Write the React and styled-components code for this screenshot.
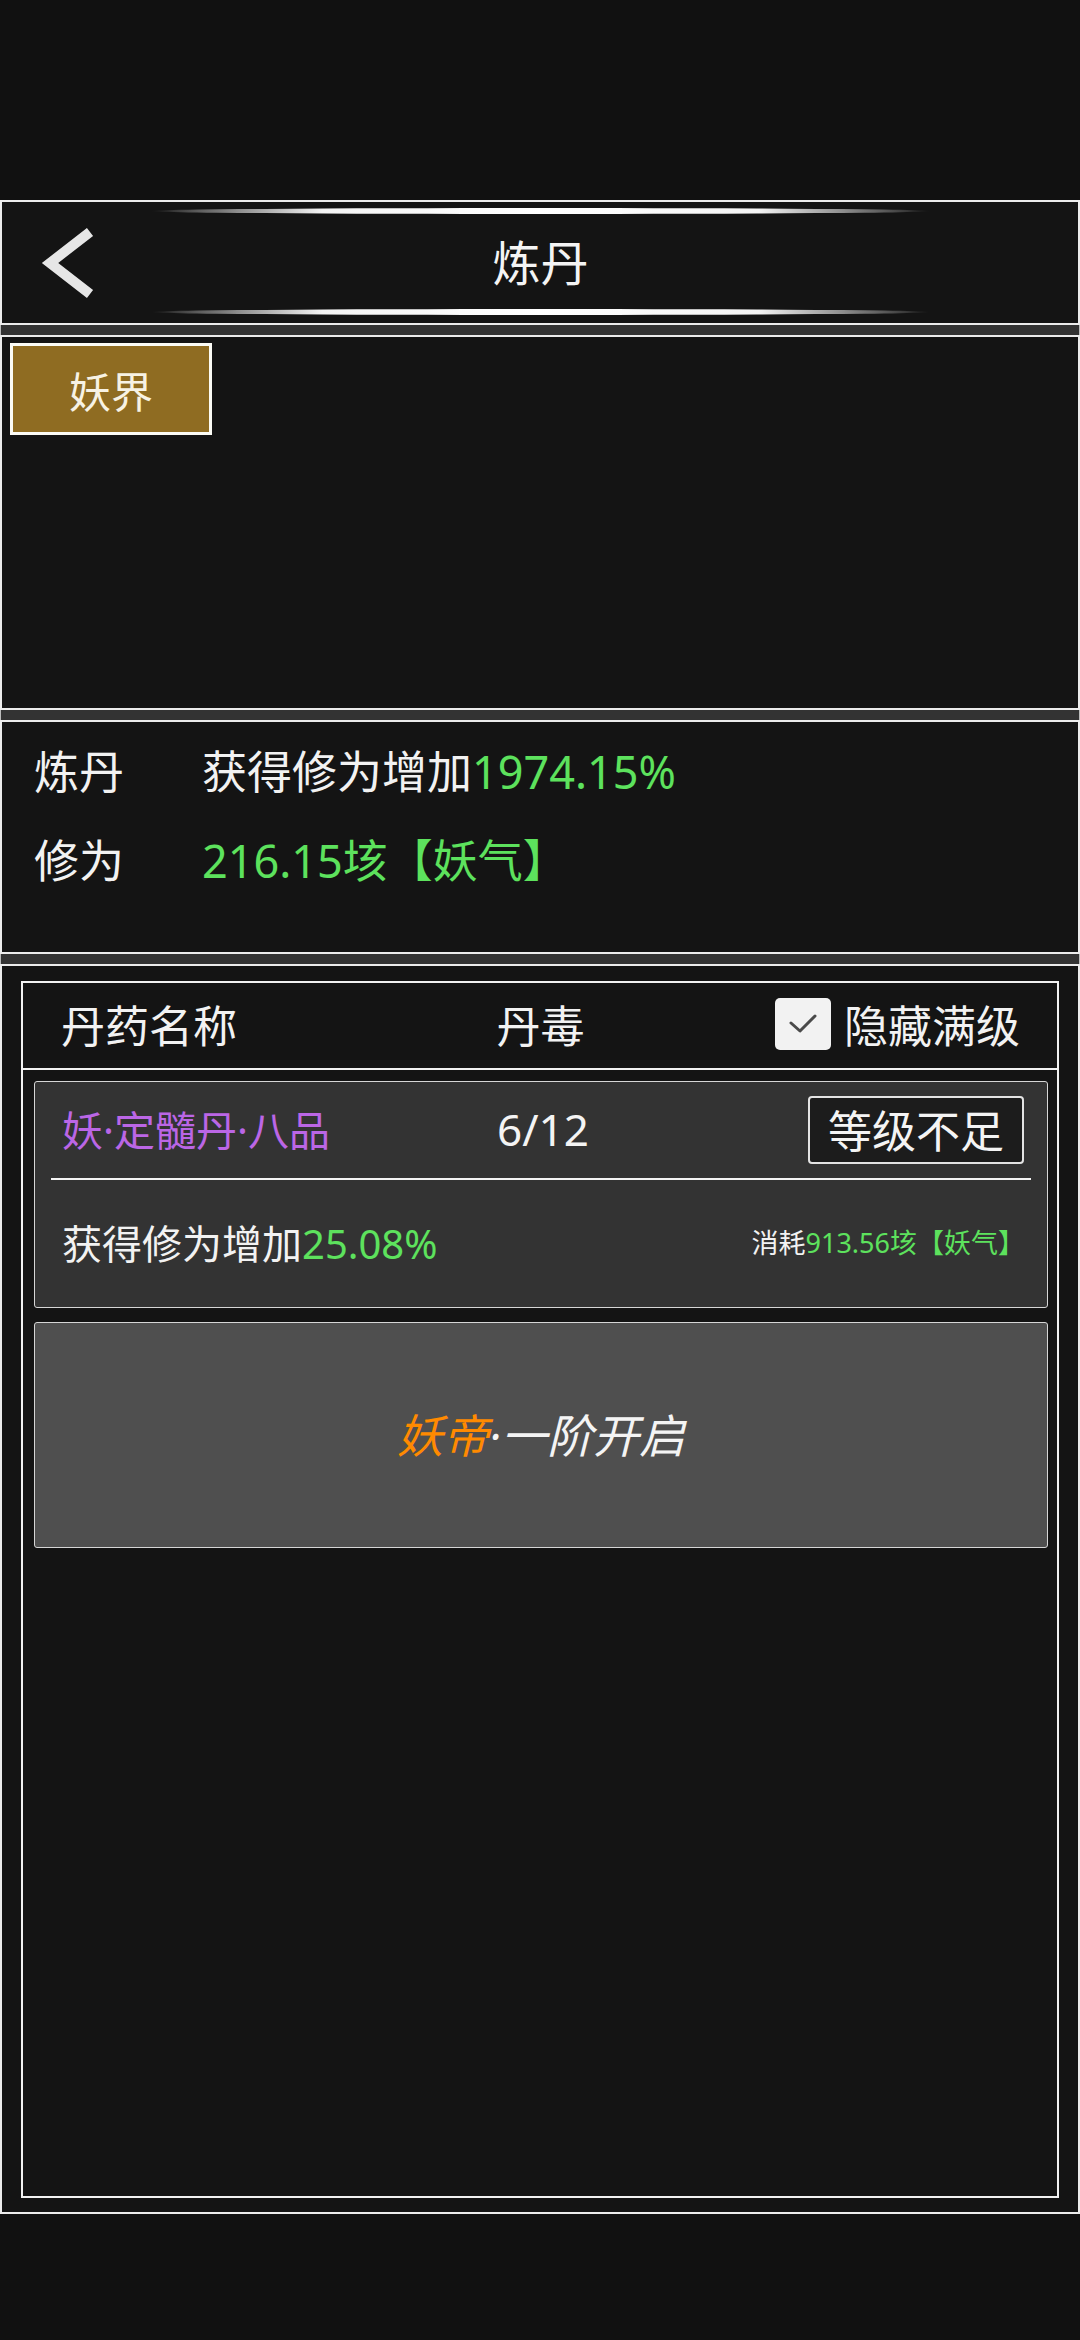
import React from "react";
import styled, { createGlobalStyle } from "styled-components";

const Global = createGlobalStyle`
  html, body { margin: 0; padding: 0; background: #111111; }
  body {
    font-family: "Noto Sans", "Noto Sans CJK SC", sans-serif;
    color: #f2f2f2;
    -webkit-font-smoothing: antialiased;
  }
  * { box-sizing: border-box; }
`;

const Screen = styled.div`
  width: 1080px;
  height: 2340px;
  display: flex;
  flex-direction: column;
  background: #111111;
  padding-top: 200px;
`;

const Panel = styled.section`
  border: 2px solid #ececec;
  background: #141414;
  height: ${(p) => p.$h}px;
  flex-shrink: 0;
`;

const Separator = styled.div`
  height: 10px;
  background: #333333;
  flex-shrink: 0;
  border-left: 1px solid #bbb;
  border-right: 1px solid #bbb;
`;

/* Header */
const Header = styled(Panel)`
  display: grid;
  grid-template-columns: 149px 779px 1fr;
  align-items: center;
`;

const BackButton = styled.button`
  background: none;
  border: none;
  padding: 0;
  margin-left: 38px;
  width: 56px;
  height: 72px;
  display: flex;
  cursor: pointer;
`;

const TitleBlock = styled.div`
  display: flex;
  flex-direction: column;
  align-items: stretch;
  padding: 6px 0 8px;
  height: 100%;
`;

const Ornament = styled.div`
  height: 6px;
  border-radius: 50%;
  background: linear-gradient(
    90deg,
    rgba(255, 255, 255, 0) 0%,
    rgba(140, 140, 140, 0.6) 6%,
    #f4f4f4 22%,
    #ffffff 50%,
    #f4f4f4 78%,
    rgba(140, 140, 140, 0.6) 94%,
    rgba(255, 255, 255, 0) 100%
  );
`;

const Title = styled.h1`
  flex: 1;
  margin: 0;
  display: flex;
  align-items: center;
  justify-content: center;
  font-size: 48px;
  font-weight: 400;
  color: #f4f4f4;
  padding-bottom: 4px;
`;

/* Tabs */
const TabArea = styled(Panel)`
  padding: 6px 8px;
  display: flex;
  align-items: flex-start;
`;

const Tab = styled.button`
  width: 202px;
  height: 92px;
  border: 3px solid #fbfbf5;
  background: #8f6c22;
  color: #f7f2e4;
  font-family: inherit;
  font-size: 42px;
  display: flex;
  align-items: center;
  justify-content: center;
  padding: 0;
  cursor: pointer;
`;

/* Stats */
const Stats = styled(Panel)`
  padding: 20px 0 0 32px;
  display: grid;
  grid-template-columns: 168px 1fr;
  grid-auto-rows: 60px;
  row-gap: 29px;
  align-items: center;
  font-size: 45px;
  line-height: 60px;
`;

const Label = styled.div`
  color: #f2f2f2;
`;

const Value = styled.div`
  color: #f2f2f2;
  white-space: nowrap;
`;

const Green = styled.span`
  color: #5de25d;
`;

/* List panel */
const ListPanel = styled(Panel)`
  padding: 15px 19px 14px;
  display: flex;
`;

const ListBox = styled.div`
  flex: 1;
  border: 2px solid #f2f2f2;
  display: flex;
  flex-direction: column;
`;

const ListHeader = styled.div`
  height: 87px;
  border-bottom: 2px solid #f2f2f2;
  display: grid;
  grid-template-columns: 1fr auto 1fr;
  align-items: center;
  padding: 0 37px 4px 38px;
  font-size: 44px;
`;

const HeaderRight = styled.label`
  justify-self: end;
  display: flex;
  align-items: center;
  gap: 13px;
`;

const CheckBox = styled.span`
  width: 56px;
  height: 52px;
  border-radius: 5px;
  background: #f2f2f2;
  display: flex;
  align-items: center;
  justify-content: center;
`;

const Cards = styled.div`
  display: flex;
  flex-direction: column;
  gap: 14px;
  padding: 11px 9px 0 11px;
`;

const Card = styled.div`
  border: 1px solid #d6d6d6;
  border-radius: 3px;
  background: ${(p) => p.$bg};
  height: ${(p) => p.$h}px;
  display: flex;
  flex-direction: column;
`;

const CardTop = styled.div`
  height: 96px;
  display: grid;
  grid-template-columns: 1fr auto 1fr;
  align-items: center;
  padding: 0 23px 0 27px;
`;

const PillName = styled.div`
  color: #bb66e6;
  font-size: 41px;
  white-space: nowrap;
  padding-bottom: 4px;
`;

const Count = styled.div`
  font-size: 44px;
  color: #f4f4f4;
  padding-bottom: 2px;
`;

const LevelButton = styled.button`
  justify-self: end;
  width: 216px;
  height: 68px;
  border: 2px solid #e4e4e4;
  border-radius: 4px;
  background: #1c1c1c;
  color: #f4f4f4;
  font-family: inherit;
  font-size: 44px;
  padding: 0 0 2px;
  display: flex;
  align-items: center;
  justify-content: center;
`;

const Divider = styled.div`
  height: 2px;
  background: #f4f4f4;
  margin: 0 16px;
`;

const CardBottom = styled.div`
  flex: 1;
  display: flex;
  align-items: center;
  justify-content: space-between;
  padding: 0 22px 4px 27px;
`;

const Gain = styled.div`
  font-size: 40px;
  color: #f2f2f2;
  white-space: nowrap;
`;

const Cost = styled.div`
  font-size: 27px;
  color: #f2f2f2;
  white-space: nowrap;
`;

const LockedText = styled.div`
  flex: 1;
  display: flex;
  align-items: center;
  justify-content: center;
  font-size: 46px;
  font-style: italic;
  color: #f4f4f4;
  padding-bottom: 4px;
`;

const Orange = styled.span`
  color: #ff8a00;
`;

export default function App() {
  return (
    <>
      <Global />
      <Screen>
        <Header $h={125}>
          <BackButton aria-label="返回">
            <svg width="56" height="72" viewBox="0 0 56 72">
              <path
                d="M50 5 L10 36 L50 67"
                fill="none"
                stroke="#e6e6e6"
                strokeWidth="10"
                strokeLinejoin="miter"
              />
            </svg>
          </BackButton>
          <TitleBlock>
            <Ornament />
            <Title>炼丹</Title>
            <Ornament />
          </TitleBlock>
          <div />
        </Header>
        <Separator />
        <TabArea $h={375}>
          <Tab>妖界</Tab>
        </TabArea>
        <Separator />
        <Stats $h={234}>
          <Label>炼丹</Label>
          <Value>
            获得修为增加<Green>1974.15%</Green>
          </Value>
          <Label>修为</Label>
          <Value>
            <Green>216.15垓【妖气】</Green>
          </Value>
        </Stats>
        <Separator />
        <ListPanel $h={1250}>
          <ListBox>
            <ListHeader>
              <div>丹药名称</div>
              <div>丹毒</div>
              <HeaderRight>
                <CheckBox>
                  <svg width="30" height="22" viewBox="0 0 30 22">
                    <path
                      d="M3 10 L12 18 L27 3"
                      fill="none"
                      stroke="#4a4a4a"
                      strokeWidth="3"
                      strokeLinecap="round"
                      strokeLinejoin="round"
                    />
                  </svg>
                </CheckBox>
                <span>隐藏满级</span>
              </HeaderRight>
            </ListHeader>
            <Cards>
              <Card $bg="#333333" $h={227}>
                <CardTop>
                  <PillName>妖·定髓丹·八品</PillName>
                  <Count>6/12</Count>
                  <LevelButton>等级不足</LevelButton>
                </CardTop>
                <Divider />
                <CardBottom>
                  <Gain>
                    获得修为增加<Green>25.08%</Green>
                  </Gain>
                  <Cost>
                    消耗<Green>913.56垓【妖气】</Green>
                  </Cost>
                </CardBottom>
              </Card>
              <Card $bg="#4f4f4f" $h={226}>
                <LockedText>
                  <Orange>妖帝</Orange>·一阶开启
                </LockedText>
              </Card>
            </Cards>
          </ListBox>
        </ListPanel>
      </Screen>
    </>
  );
}
